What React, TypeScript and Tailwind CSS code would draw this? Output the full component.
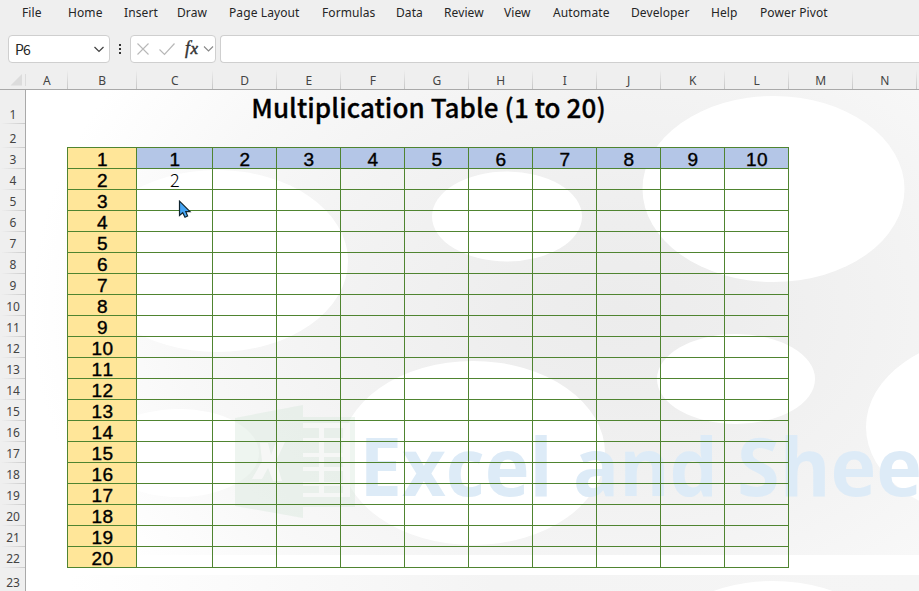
import React from 'react';

type MenuItem = {
  label: string;
  className: string;
};

type Column = {
  name: string;
  className: string;
};

const menu: MenuItem[] = [
  { label: 'File', className: 'w-[46px]' },
  { label: 'Home', className: 'w-[56px]' },
  { label: 'Insert', className: 'w-[53px]' },
  { label: 'Draw', className: 'w-[52px]' },
  { label: 'Page Layout', className: 'w-[93px]' },
  { label: 'Formulas', className: 'w-[74px]' },
  { label: 'Data', className: 'w-12' },
  { label: 'Review', className: 'w-[60px]' },
  { label: 'View', className: 'w-[49px]' },
  { label: 'Automate', className: 'w-[78px]' },
  { label: 'Developer', className: 'w-20' },
  { label: 'Help', className: 'w-[49px]' },
  { label: 'Power Pivot', className: 'w-[90px]' },
];

const columns: Column[] = [
  { name: 'A', className: 'w-[42px]' },
  { name: 'B', className: 'w-[69px]' },
  { name: 'C', className: 'w-[76px]' },
  ...'DEFGHIJKLMN'.split('').map((name) => ({ name, className: 'w-16' })),
];

const factors = Array.from({ length: 10 }, (_, i) => i + 1);
const multipliers = Array.from({ length: 20 }, (_, i) => i + 1);

const MenuBar: React.FC = () => (
  <nav className="flex h-[35px] shrink-0 pl-[22px] pt-[4px] font-['Noto_Sans','Open_Sans',sans-serif] text-[12px] leading-[18px] tracking-[0.1px] text-[#252525]">
    {menu.map((item) => (
      <span key={item.label} className={`shrink-0 whitespace-nowrap ${item.className}`}>
        {item.label}
      </span>
    ))}
  </nav>
);

const FormulaBar: React.FC = () => (
  <div className="flex h-[28px] shrink-0">
    <div className="ml-2 flex w-[102px] shrink-0 items-center justify-between rounded-[4px] border border-[#cfcfcf] bg-white pl-[6px] pr-1">
      <span className="pb-px font-['Noto_Sans_CJK_SC','Open_Sans',sans-serif] text-[14px] leading-[20px] tracking-[-0.8px] text-[#252525]">P6</span>
      <svg width="12" height="8" viewBox="0 0 12 8" fill="none" stroke="#444" strokeWidth="1.3">
        <path d="M1.5 2 6 6.4 10.5 2" />
      </svg>
    </div>
    <div className="flex w-5 shrink-0 flex-col items-center justify-center gap-[2px]">
      <span className="h-[2px] w-[2px] bg-[#333]" />
      <span className="h-[2px] w-[2px] bg-[#333]" />
      <span className="h-[2px] w-[2px] bg-[#333]" />
    </div>
    <div className="flex w-[86px] shrink-0 items-center rounded-[4px] border border-[#cfcfcf] bg-white">
      <svg width="84" height="26" viewBox="0 0 84 26" fill="none">
        <path d="M6.5 7.5 17.5 18.5M17.5 7.5 6.5 18.5" stroke="#b8b8b8" strokeWidth="1.1" />
        <path d="M28.5 13.5 33.5 18.5 43.5 7.5" stroke="#b8b8b8" strokeWidth="1.2" />
        <text x="54" y="18" fontFamily="Liberation Serif, serif" fontStyle="italic" fontSize="18" fill="#333" stroke="#333" strokeWidth="0.4">
          f
        </text>
        <text x="59.5" y="18" fontFamily="Liberation Serif, serif" fontStyle="italic" fontSize="17" fill="#333" stroke="#333" strokeWidth="0.5">
          x
        </text>
        <path d="M73 10.5 77.5 15 82 10.5" stroke="#888" strokeWidth="1.1" />
      </svg>
    </div>
    <div className="ml-1 flex-1 rounded-l-[4px] border border-r-0 border-[#cfcfcf] bg-white" />
  </div>
);

const ColumnHeaders: React.FC = () => (
  <div className="flex h-[27px] shrink-0 overflow-hidden border-b border-[#a9a9a9] pt-[7px] font-['Noto_Sans','Open_Sans',sans-serif] text-[12px] text-[#444]">
    <div className="flex w-[26px] shrink-0 items-end justify-end pb-[3px]">
      <svg width="16" height="12" viewBox="0 0 16 12">
        <path d="M12 0V11.5H0.5Z" fill="#dcdcdc" />
        <path d="M15.5 0V12" stroke="#dcdcdc" />
      </svg>
    </div>
    {columns.map((col) => (
      <div key={col.name} className={`flex shrink-0 ${col.className}`}>
        <span className="flex-1 pl-[0.5px] text-center leading-[21px]">{col.name}</span>
        <span className="w-px bg-linear-to-b from-[#efefef] to-[#c6c6c6]" />
      </div>
    ))}
  </div>
);

const RowHeaders: React.FC = () => (
  <div className="flex w-[26px] shrink-0 flex-col border-r border-[#a9a9a9] bg-[#efefef] pl-px font-['Noto_Sans','Open_Sans',sans-serif] text-[12px] text-[#444]">
    {Array.from({ length: 23 }, (_, i) => i + 1).map((row) => (
      <div
        key={row}
        className={`flex shrink-0 flex-col justify-end ${row === 1 ? 'h-[34px]' : row === 2 ? 'h-6' : row === 23 ? 'h-[23px]' : 'h-[21px]'}`}
      >
        <span className="text-center leading-[17px]">{row}</span>
        {row < 23 && <span className="h-px bg-linear-to-r from-[#efefef] to-[#cbcbcb]" />}
      </div>
    ))}
  </div>
);

const Backdrop: React.FC = () => (
  <svg className="absolute inset-0" width="893" height="501" viewBox="26 90 893 501">
    <defs>
      <radialGradient id="shade" gradientUnits="userSpaceOnUse" cx="0" cy="0" r="1" gradientTransform="translate(620 310) scale(590 440)">
        <stop offset="0" stopColor="#ececec" />
        <stop offset="0.2" stopColor="#eeeeee" />
        <stop offset="0.5" stopColor="#f3f3f3" />
        <stop offset="0.75" stopColor="#f8f8f8" />
        <stop offset="1" stopColor="#ffffff" />
      </radialGradient>
      <linearGradient id="floor" x1="0" x2="1">
        <stop offset="0" stopColor="#ffffff" />
        <stop offset="0.5" stopColor="#f4f4f4" />
        <stop offset="1" stopColor="#f5f5f5" />
      </linearGradient>
    </defs>
    <rect x="26" y="90" width="893" height="465" fill="url(#shade)" />
    <rect x="70" y="575" width="849" height="16" fill="url(#floor)" />
    <g fill="#fff">
      <ellipse cx="217" cy="261" rx="131" ry="91" />
      <ellipse cx="507" cy="216.5" rx="75" ry="45" />
      <ellipse cx="773.5" cy="189" rx="131" ry="93" />
      <ellipse cx="736" cy="379" rx="79" ry="45" />
      <ellipse cx="998" cy="427" rx="132" ry="92" />
      <ellipse cx="473" cy="453" rx="132" ry="92" />
      <ellipse cx="179" cy="453" rx="80" ry="44" />
      <ellipse cx="773" cy="674" rx="132" ry="93" />
    </g>
    {/* workbook logo */}
    <g fill="#d6e8dc" fillOpacity="0.42">
      <path d="M235 418 303 405V518L235 506Z" />
      <path d="M303 417H355V507H303Z" />
    </g>
    <g fill="#f8f8f8" fillOpacity="0.85">
      <path d="M260 443H268L271 455 276 442H285L276 461 282 481H273L268 468 262 479H252L262 461Z" />
      <path d="M303 423H350V497H303V493H319V486H303V482H319V471H303V467H319V457H303V453H319V442H303V438H319V428H303ZM324 428V438H343V428ZM324 442V453H343V442ZM324 457V467H343V457ZM324 471V482H343V471ZM324 486V493H343V486Z" fillRule="evenodd" />
    </g>
    <g fill="#ddebf7" fontFamily="Open Sans, Carlito, sans-serif" fontWeight="700" fontSize="81">
      <text x="359.5" y="496" textLength="193" lengthAdjust="spacingAndGlyphs">Excel</text>
      <text x="573" y="496" textLength="145" lengthAdjust="spacingAndGlyphs">and</text>
      <text x="737" y="496" textLength="185" lengthAdjust="spacingAndGlyphs">Shee</text>
    </g>
  </svg>
);

const MultiplicationTable: React.FC = () => (
  <div className="ml-[41px] w-[722px] border-l border-t border-[#4f8430] font-['Liberation_Sans',Arial,sans-serif] text-[19px] leading-[24px] tracking-[0.4px] text-black [font-kerning:none]">
    {multipliers.map((n) => (
      <div key={n} className="flex h-[21px]">
        <div className="w-[69px] shrink-0 border-b border-r border-[#4f8430] bg-[#ffe699] pl-px text-center [-webkit-text-stroke:0.4px_black]">
          {n}
        </div>
        {factors.map((f) => (
          <div
            key={f}
            className={`shrink-0 border-b border-r border-[#4f8430] text-center ${f === 1 ? 'w-[76px]' : 'w-16'} ${n === 1 ? 'bg-[#b4c6e7] pl-px [-webkit-text-stroke:0.4px_black]' : ''}`}
          >
            {n === 1 && f}
            {n === 2 && f === 1 && (
              <span className="block pl-px font-['Noto_Sans_CJK_SC',sans-serif] text-[18px] font-light leading-[21px]">2</span>
            )}
          </div>
        ))}
      </div>
    ))}
  </div>
);

const Pointer: React.FC = () => (
  <svg className="absolute left-[152px] top-[110px]" width="14" height="19" viewBox="0 0 14 19">
    <path d="M1.5 1.2V15.5L4.7 12.7 7 17.3 9.6 16 7.8 11.7H12Z" fill="#45a5f5" stroke="#10242e" strokeWidth="1.2" />
  </svg>
);

export default function App() {
  return (
    <div className="flex h-[591px] w-[919px] flex-col overflow-hidden bg-[#efefef]">
      <MenuBar />
      <FormulaBar />
      <ColumnHeaders />
      <div className="flex min-h-0 flex-1">
        <RowHeaders />
        <main className="relative flex-1 overflow-hidden bg-white">
          <Backdrop />
          <div className="relative">
            <h1 className="ml-[41px] h-[57px] w-[722px] whitespace-nowrap pl-px text-center font-['Noto_Sans_CJK_SC',sans-serif] text-[26px] font-medium leading-[34px] tracking-[0.07px] text-black [-webkit-text-stroke:0.3px_black]">
              Multiplication Table (1 to 20)
            </h1>
            <MultiplicationTable />
          </div>
          <Pointer />
        </main>
      </div>
    </div>
  );
}
